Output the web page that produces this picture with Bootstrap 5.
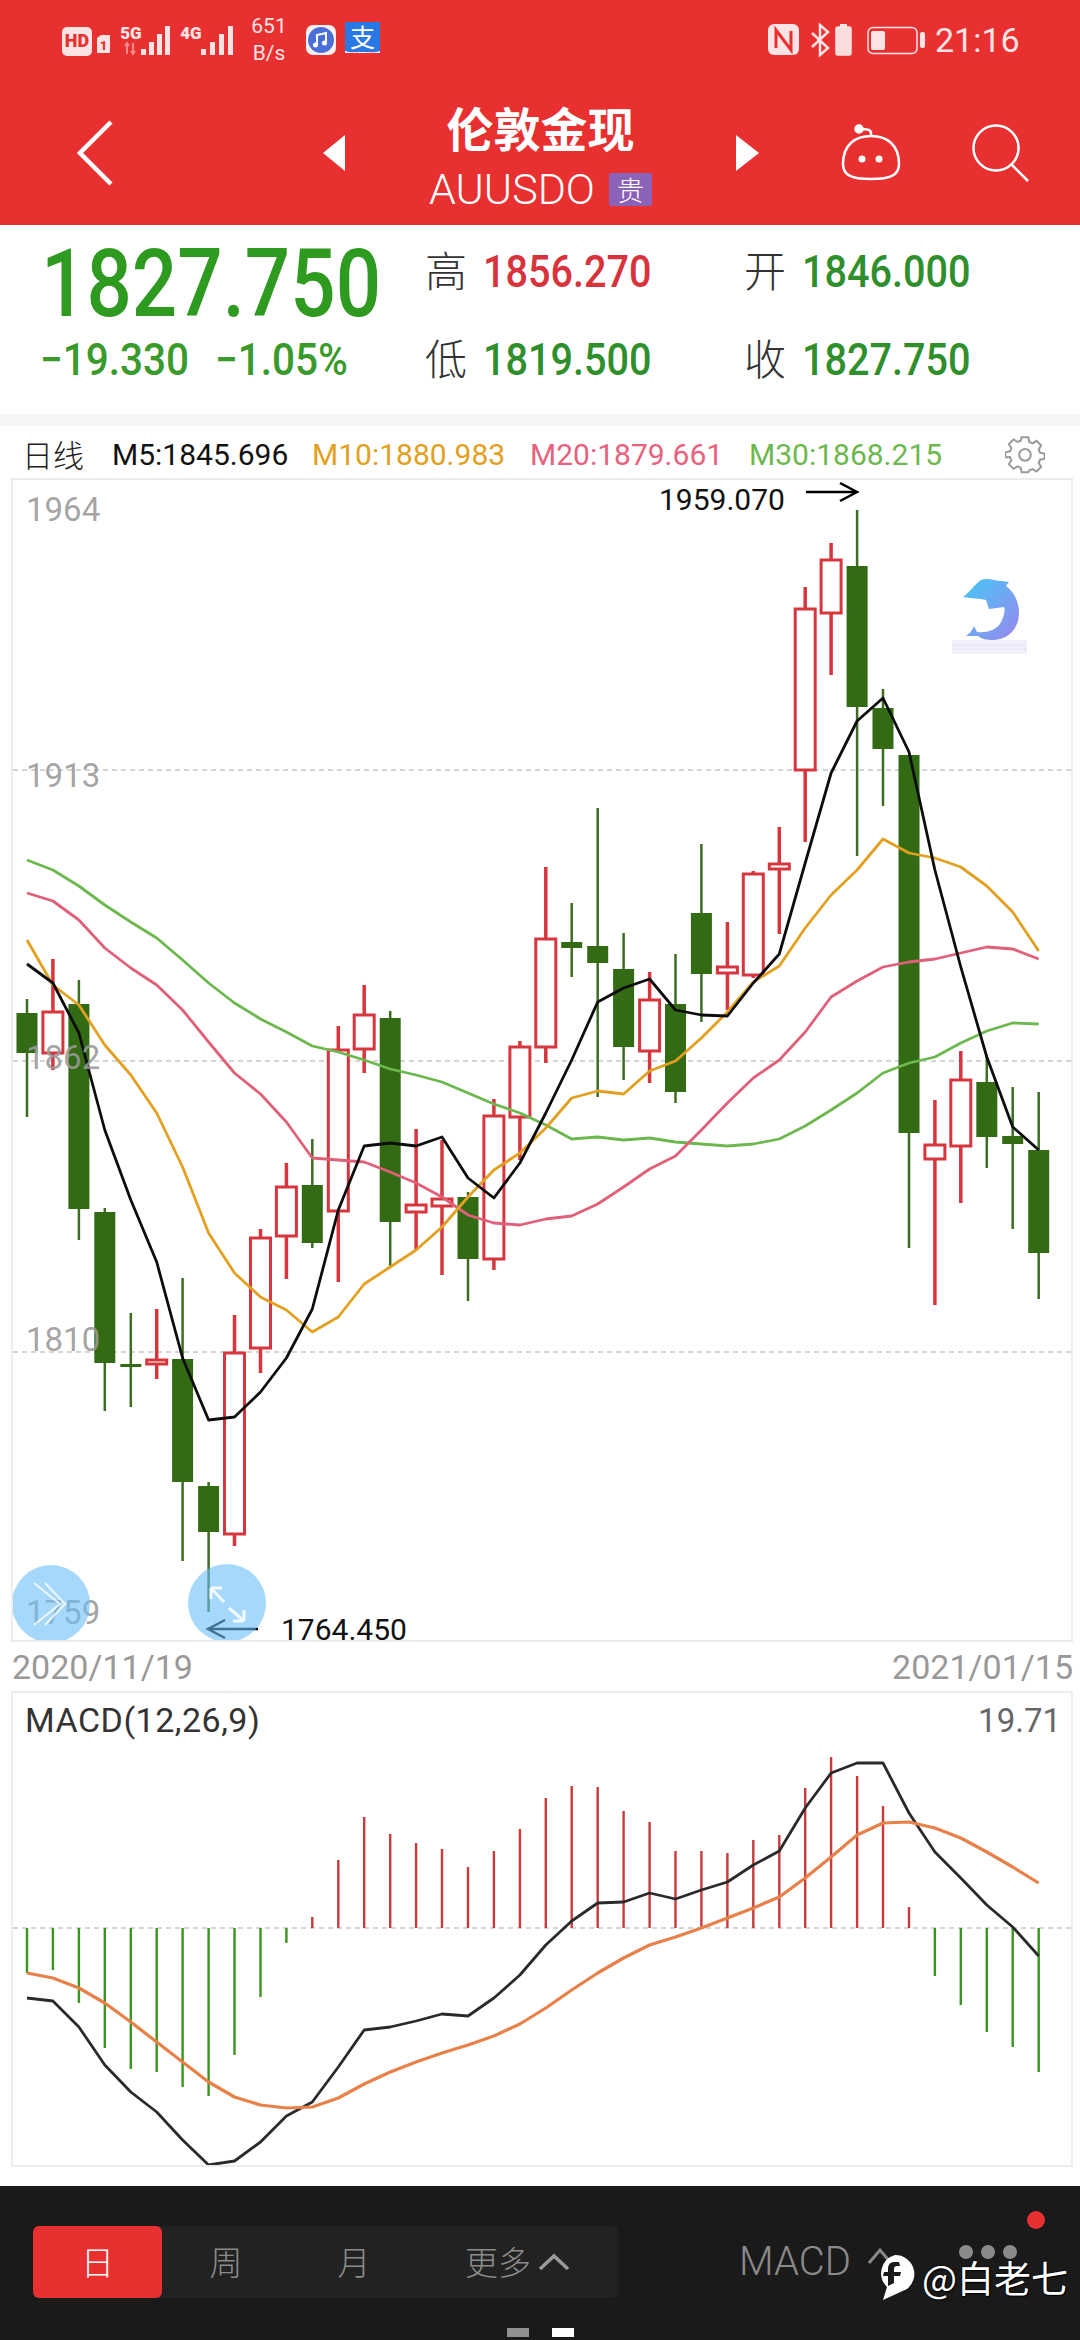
<!DOCTYPE html>
<html lang="zh">
<head>
  <meta charset="UTF-8" />
  <title>伦敦金现 AUUSDO</title>
  <meta name="viewport" content="width=device-width, initial-scale=1" />
  <link href="https://cdn.jsdelivr.net/npm/bootstrap@5.3.2/dist/css/bootstrap.min.css" rel="stylesheet" />
  <style>
    body {
      width: 1080px;
      height: 2340px;
      overflow: hidden;
      background: #fff;
      font-family: Roboto, "Noto Sans CJK SC", sans-serif;
    }
    svg { display: block; flex: none; }
    .top-head { height: 225px; background: #e83031; color: #fff; }
    .status-row { height: 80px; padding-left: 62px; padding-right: 63px; color: #fde3e3; }
    .net-speed { margin-left: 17px; width: 36px; font-size: 21px; line-height: 27px; text-align: center; }
    .sb-music { margin-left: 19px; }
    .sb-pay { margin-left: 9px; }
    .sb-time { margin-left: 10px; font-size: 34px; line-height: 1; width: 82px; }
    .nav-row { height: 145px; padding-left: 77px; }
    .tri-left { margin-left: 210px; }
    .title-block { width: 391px; text-align: center; }
    .title-main { font-family: "Noto Sans CJK SC", sans-serif; font-size: 47px; font-weight: 700; line-height: 58px; margin: 4px 0 11px; }
    .title-sub { height: 44px; font-size: 43px; font-weight: 300; line-height: 44px; }
    .grade-tag { width: 43px; height: 33px; background: #8a62b8; border-radius: 2px; margin-left: 14px; font-family: "Noto Sans CJK SC", sans-serif; font-size: 27px; line-height: 33px; }
    .nav-robot { margin-left: 82px; }
    .nav-search { margin-left: 71px; }

    .quote-grid {
      height: 189px;
      padding: 3px 0 0 40px;
      display: grid;
      grid-template-columns: 387px 319px 1fr;
      grid-auto-rows: 88px;
      align-items: center;
    }
    .squeeze { display: inline-block; transform: scaleX(.9); transform-origin: left center; white-space: nowrap; }
    .last-price { font-size: 94px; font-weight: 500; color: #2f9a20; line-height: 1; margin: 24px 0 0 1px; }
    .last-price .squeeze { transform: scaleX(.85); }
    .chg-val { font-size: 45px; font-weight: 500; color: #3a9a2c; }
    .chg-first { width: 175px; }
    .stat-name { display: inline-block; width: 58px; margin-left: -2px; margin-bottom: 6px; font-size: 42px; color: #333; font-family: "Noto Sans CJK SC", sans-serif; font-weight: 300; line-height: 1; vertical-align: middle; }
    .stat-val { font-size: 44px; font-weight: 500; vertical-align: middle; }
    .tone-up { color: #d8333c; }
    .tone-down { color: #2f8f2c; }

    .grey-strip { height: 12px; background: #f5f5f5; }
    .ma-row { height: 52px; padding: 4px 0 0 22px; font-size: 30px; }
    .ma-name { font-family: "Noto Sans CJK SC", sans-serif; font-weight: 300; color: #222; width: 90px; font-size: 31px; }
    .ma5 { color: #111; width: 200px; }
    .ma10 { color: #e3a020; width: 218px; }
    .ma20 { color: #e6627e; width: 219px; }
    .ma30 { color: #6db84e; width: 256px; }

    .chart-box { margin: 0 7px 0 11px; border: 2px solid #ececec; }
    .kline-box { height: 1164px; }
    .macd-box { height: 476px; }
    .date-row { height: 49px; margin: 0 7px 0 12px; font-size: 34px; line-height: 50px; color: #999; }
    .white-gap { height: 19px; }

    .tab-bar { height: 154px; padding-top: 40px; background: #1a1a1a; position: relative; }
    .tab-top { height: 72px; padding-left: 33px; }
    .seg-tabs { width: 585px; height: 72px; background: #222; border-radius: 6px; color: #8c8c8c; font-family: "Noto Sans CJK SC", sans-serif; font-weight: 300; font-size: 33px; }
    .seg-tab { width: 128px; }
    .seg-on { width: 129px; background: #e83031; color: #fff; border-radius: 6px; }
    .seg-more { width: 200px; }
    .more-arrow { margin-left: 6px; }
    .macd-pick { margin-left: 121px; font-size: 40px; color: #8a8a8a; font-weight: 300; line-height: 1; }
    .pick-arrow { margin-left: 16px; margin-top: -12px; }
    .pick-dots { margin-left: 66px; margin-top: -18px; }
    .red-dot { position: absolute; left: 1027px; top: 25px; width: 18px; height: 18px; border-radius: 50%; background: #e83031; }
    .pager { gap: 23px; margin-top: 30px; }
    .pager i { display: block; width: 22px; height: 9px; background: #8f8f8f; }
    .pager i.on { background: #fff; }
    .wm { position: absolute; left: 875px; top: 68px; color: #fff; font-size: 37px; line-height: 44px; font-family: "Noto Sans CJK SC", sans-serif; text-shadow: 0 0 2px #000, 1px 1px 1px #000; }
    .wm svg { margin-right: 6px; }
  </style>
</head>
<body>

  <div class="top-head">
    <div class="status-row d-flex align-items-center">
      <svg width="172" height="34" viewBox="62 23 172 34">
        <rect x="62" y="27" width="30" height="29" rx="5" fill="#fde3e3"/>
        <text x="77" y="47" text-anchor="middle" font-size="18" font-weight="900" fill="#e83031">HD</text>
        <path d="M97 38l4-3h9v18H97z" fill="#fde3e3"/>
        <text x="103.500" y="50" text-anchor="middle" font-size="13" font-weight="900" fill="#e83031">1</text>
        <text x="131" y="39" text-anchor="middle" font-size="17" font-weight="900" fill="#fde3e3">5G</text>
        <path d="M127 43v11M125 46l2-3 2 3M133 54V43M131 51l2 3 2-3" stroke="#f58a8a" stroke-width="2" fill="none"/>
        <rect x="141" y="49" width="5" height="6" fill="#fde3e3"/><rect x="149" y="42" width="5" height="13" fill="#fde3e3"/><rect x="157" y="34" width="5" height="21" fill="#fde3e3"/><rect x="165" y="26" width="5" height="29" fill="#fde3e3"/>
        <text x="191" y="39" text-anchor="middle" font-size="17" font-weight="900" fill="#fde3e3">4G</text>
        <rect x="201" y="49" width="5" height="6" fill="#fde3e3"/><rect x="210" y="42" width="5" height="13" fill="#fde3e3"/><rect x="219" y="34" width="5" height="21" fill="#fde3e3"/><rect x="228" y="26" width="5" height="29" fill="#fde3e3"/>
      </svg>
      <div class="net-speed">651<br>B/s</div>
      <svg class="sb-music" width="30" height="30" viewBox="0 0 30 30">
        <rect width="30" height="30" rx="7" fill="#fdf0f0"/>
        <circle cx="15" cy="15" r="13" fill="#4a70d8"/>
        <path d="M11 20V10l9-2v10" stroke="#fff" stroke-width="2" fill="none"/>
        <circle cx="9.500" cy="20" r="2.500" fill="#fff"/><circle cx="18.500" cy="18" r="2.500" fill="#fff"/>
      </svg>
      <svg class="sb-pay" width="35" height="36" viewBox="0 0 35 36">
        <rect width="35" height="30" fill="#2a78e4"/>
        <path d="M17 30c8 0 14 1 18-1v2H0v-2c5 2 10 1 17 1z" fill="#fff"/>
        <text x="17.500" y="25" text-anchor="middle" font-size="25" fill="#fff" font-family="Noto Sans CJK SC">支</text>
      </svg>
      <svg class="ms-auto" width="157" height="34" viewBox="768 23 157 34">
        <rect x="768" y="24" width="31" height="31" rx="6" fill="#fde3e3"/>
        <path d="M776 48V30l15 20V31" stroke="#e83031" stroke-width="3" fill="none"/>
        <path d="M812 33l16 15-8 7V25l8 7-16 15" stroke="#fde3e3" stroke-width="2.500" fill="none"/>
        <rect x="836" y="27" width="15" height="28" rx="2" fill="#fbdcdc" stroke="#fde3e3" stroke-width="1.500"/>
        <rect x="840" y="24" width="7" height="3" fill="#fde3e3"/>
        <rect x="868" y="27.500" width="49" height="26" rx="5" fill="none" stroke="#fde3e3" stroke-width="1.500"/>
        <rect x="871" y="31" width="14" height="19" rx="2" fill="#fde3e3"/>
        <rect x="920" y="32" width="5" height="16" rx="2" fill="#fde3e3"/>
      </svg>
      <div class="sb-time">21:16</div>
    </div>
    <div class="nav-row d-flex align-items-center">
      <svg width="36" height="66" viewBox="76 117 36 66"><path d="M110 119L79 150l31 31" fill="none" stroke="#fff" stroke-width="4.500"/></svg>
      <svg class="tri-left" width="22" height="36" viewBox="0 0 22 36"><path d="M22 0v36L0 18z" fill="#fff"/></svg>
      <div class="title-block">
        <div class="title-main">伦敦金现</div>
        <div class="title-sub d-flex justify-content-center align-items-center">AUUSDO<span class="grade-tag">贵</span></div>
      </div>
      <svg width="23" height="36" viewBox="0 0 23 36"><path d="M0 0v36l23-18z" fill="#fff"/></svg>
      <svg class="nav-robot" width="60" height="58" viewBox="840 125 60 58" fill="none" stroke="#fff" stroke-width="2.500">
        <path d="M842 165c0-20 13-28 28-28s28 8 28 28c0 11-8 15-28 15s-28-4-28-15z"/>
        <path d="M870 137c1-8-4-6-10-7"/>
        <circle cx="858" cy="130" r="3.500" fill="#fff"/><circle cx="861" cy="160" r="3.500" fill="#fff" stroke="none"/><circle cx="878" cy="160" r="3.500" fill="#fff" stroke="none"/>
      </svg>
      <svg class="nav-search" width="58" height="58" viewBox="970 124 58 58" fill="none" stroke="#fff" stroke-width="2.500">
        <circle cx="994" cy="148" r="22.500"/><path d="M1010 165l16 16"/>
      </svg>
    </div>
  </div>

  <div class="quote-grid">
    <div class="last-price"><span class="squeeze">1827.750</span></div>
    <div><span class="stat-name">高</span><span class="stat-val squeeze tone-up">1856.270</span></div>
    <div><span class="stat-name">开</span><span class="stat-val squeeze tone-down">1846.000</span></div>
    <div class="d-flex"><span class="chg-val chg-first"><span class="squeeze">−19.330</span></span><span class="chg-val"><span class="squeeze">−1.05%</span></span></div>
    <div><span class="stat-name">低</span><span class="stat-val squeeze tone-down">1819.500</span></div>
    <div><span class="stat-name">收</span><span class="stat-val squeeze tone-down">1827.750</span></div>
  </div>
  <div class="grey-strip"></div>
  <div class="ma-row d-flex align-items-center">
    <span class="ma-name">日线</span>
    <span class="ma5">M5:1845.696</span>
    <span class="ma10">M10:1880.983</span>
    <span class="ma20">M20:1879.661</span>
    <span class="ma30">M30:1868.215</span>
    <svg width="40" height="40" viewBox="0 0 24 24" fill="none" stroke="#999" stroke-width="1.200">
      <path d="M10 2h4l.6 2.800 1.900.8 2.400-1.500 2.800 2.800-1.500 2.400.8 1.900 2.800.6v3l-2.800.6-.8 1.900 1.500 2.400-2.800 2.800-2.400-1.500-1.900.8L14 23h-4l-.6-2.800-1.900-.8-2.400 1.500-2.800-2.800 1.500-2.400-.8-1.900L.2 14v-3l2.800-.6.8-1.900-1.500-2.400 2.800-2.800 2.400 1.500 1.900-.8z"/>
      <circle cx="12" cy="12.500" r="3.500"/>
    </svg>
  </div>

  <div class="chart-box kline-box">
    <svg width="1058" height="1160" viewBox="13 480 1058 1160">
      <defs>
        <linearGradient id="finGrad" x1="0" y1="0" x2="1" y2="1">
          <stop offset="0" stop-color="#45c8f5"/><stop offset="1" stop-color="#9a86ee"/>
        </linearGradient>
      </defs>
      <path d="M13 770H1071M13 1061H1071M13 1352H1071" stroke="#d4d4d4" stroke-width="2" stroke-dasharray="5 4"/>
      <g id="candles"></g>
      <g id="maLines" fill="none" stroke-width="2.800" stroke-linejoin="round"></g>
      <g font-size="33" fill="#999" fill-opacity=".9">
        <text x="26" y="521">1964</text>
        <text x="26" y="787">1913</text>
        <text x="26" y="1069">1862</text>
        <text x="26" y="1351">1810</text>
        <text x="26" y="1624">1759</text>
      </g>
      <g font-size="30" fill="#111">
        <text x="659" y="510">1959.070</text>
        <text x="281" y="1640">1764.450</text>
      </g>
      <path d="M806 492H856M840 483l17 9-17 9" fill="none" stroke="#000" stroke-width="2.500"/>
      <path d="M258 1629H208M225 1620l-17 9 17 9" fill="none" stroke="#000" stroke-width="2.500"/>
      <circle cx="51" cy="1604" r="39" fill="#69bef8" fill-opacity=".6"/>
      <circle cx="227" cy="1603" r="39" fill="#69bef8" fill-opacity=".6"/>
      <path d="M34 1583l26 21-26 21M45 1583l20 21-20 21" fill="none" stroke="#fff" stroke-opacity=".8" stroke-width="2"/>
      <path d="M211 1588l13 14M211 1588h11M211 1588v11M229 1608l15 13M244 1621h-11M244 1621v-11" fill="none" stroke="#fff" stroke-opacity=".85" stroke-width="3"/>
      <rect x="952" y="640" width="75" height="14" fill="#f0f0fb"/>
      <path d="M952 645H1027M952 649H1027" stroke="#e2e2f5"/>
      <path d="M963 597C970 592 975 584 981 580C988 577 994 581 1002 581L1009 582L1006 586C1014 592 1019 602 1019 613C1019 630 1006 641 992 640C986 640 982 639 978 636L966 636C969 634 972 631 974 626L977 632C985 633 998 631 1002 620C1005 613 1005 609 1004 607L989 609L986 600C980 598 973 599 963 597Z" fill="url(#finGrad)"/>
    </svg>
  </div>

  <div class="date-row d-flex justify-content-between">
    <span>2020/11/19</span><span>2021/01/15</span>
  </div>

  <div class="chart-box macd-box">
    <svg width="1058" height="472" viewBox="13 1693 1058 472">
      <path d="M13 1928H1071" stroke="#d4d4d4" stroke-width="2" stroke-dasharray="5 4"/>
      <g id="macdBars" stroke-width="2.400"></g>
      <g id="macdLines" fill="none" stroke-linejoin="round"></g>
      <text x="25" y="1732" font-size="34" letter-spacing=".5" fill="#333">MACD(12,26,9)</text>
      <text x="1061" y="1732" font-size="33" fill="#666" text-anchor="end">19.71</text>
    </svg>
  </div>
  <div class="white-gap"></div>

  <div class="tab-bar">
    <div class="tab-top d-flex align-items-center">
      <div class="seg-tabs d-flex">
        <div class="seg-tab seg-on d-flex align-items-center justify-content-center">日</div>
        <div class="seg-tab d-flex align-items-center justify-content-center">周</div>
        <div class="seg-tab d-flex align-items-center justify-content-center">月</div>
        <div class="seg-more d-flex align-items-center justify-content-center">更多
          <svg class="more-arrow" width="34" height="20" viewBox="0 0 34 20"><path d="M3 17L17 4l14 13" fill="none" stroke="#999" stroke-width="3.500"/></svg>
        </div>
      </div>
      <span class="macd-pick">MACD</span>
      <svg class="pick-arrow" width="26" height="18" viewBox="0 0 26 18"><path d="M2 16L13 3l11 13" fill="none" stroke="#8a8a8a" stroke-width="3"/></svg>
      <svg class="pick-dots" width="58" height="18" viewBox="0 0 58 18" fill="#8a8a8a"><circle cx="7" cy="8" r="7"/><circle cx="29" cy="8" r="7"/><circle cx="51" cy="8" r="7"/></svg>
    </div>
    <div class="pager d-flex justify-content-center"><i></i><i class="on"></i></div>
    <span class="red-dot"></span>
    <div class="wm d-flex align-items-center">
      <svg width="41" height="46" viewBox="0 0 41 46">
        <path d="M20 1a19 19 0 0 1 12 34L8 46l4-13A19 19 0 0 1 20 1z" fill="#fff"/>
        <path d="M24 8h-5c-4 0-6 3-6 7v3H9l-1 4h5v10l6-3v-7h6l1-4h-7v-3c0-2 1-3 3-3h3z" fill="#1a1a1a"/>
      </svg>@白老七
    </div>
  </div>

  <script src="https://cdn.jsdelivr.net/npm/bootstrap@5.3.2/dist/js/bootstrap.bundle.min.js"></script>
  <script>
    // [high, bodyTop, bodyBottom, low, isRed], page y coordinates
    const candles = [
      [999,1013,1053,1117,0],[959,1011,1054,1070,1],[980,1004,1209,1240,0],[1208,1212,1363,1411,0],
      [1313,1364,1367,1407,0],[1309,1359,1365,1379,1],[1278,1359,1482,1561,0],[1482,1486,1532,1612,0],
      [1315,1352,1535,1546,1],[1229,1237,1349,1373,1],[1163,1186,1237,1279,1],[1139,1185,1243,1248,0],
      [1026,1049,1212,1282,1],[985,1014,1050,1073,1],[1011,1018,1222,1267,0],[1129,1204,1213,1250,1],
      [1140,1198,1207,1275,1],[1192,1197,1259,1301,0],[1099,1115,1260,1270,1],[1041,1046,1118,1160,1],
      [867,938,1048,1063,1],[903,942,948,977,0],[808,946,963,1097,0],[933,969,1047,1080,0],
      [972,999,1052,1083,1],[954,1004,1092,1103,0],[844,913,974,1022,0],[922,966,974,1010,1],
      [871,873,976,978,1],[827,863,870,934,1],[587,608,771,842,1],[543,559,614,675,1],
      [510,566,707,856,0],[689,708,749,806,0],[755,755,1133,1248,0],[1100,1144,1160,1305,1],
      [1051,1079,1147,1203,1],[1055,1082,1137,1168,0],[1087,1136,1144,1229,0],[1092,1150,1253,1299,0]
    ];
    const ma5 = [964,983,1033,1130,1200,1262,1358,1420,1417,1392,1358,1309,1210,1146,1143,1146,1137,1178,1198,1163,1113,1060,1002,988,979,1010,1015,1016,983,954,863,773,721,698,752,870,967,1057,1127,1150];
    const ma10 = [940,985,1005,1045,1075,1113,1167,1233,1273,1297,1310,1332,1317,1284,1267,1250,1227,1197,1170,1153,1128,1098,1091,1094,1071,1061,1038,1012,982,966,928,895,870,839,853,858,867,886,912,951];
    const ma20 = [893,901,920,948,968,985,1010,1042,1073,1094,1122,1158,1160,1162,1172,1183,1197,1215,1223,1225,1219,1216,1204,1187,1169,1156,1130,1103,1078,1060,1032,997,981,967,962,959,953,947,949,959];
    const ma30 = [860,870,886,905,922,938,960,983,1003,1019,1032,1046,1052,1060,1069,1075,1082,1093,1104,1113,1125,1139,1137,1140,1138,1142,1144,1146,1144,1139,1126,1110,1093,1073,1063,1057,1043,1031,1023,1024];
    const bars = [1973,1970,2003,2048,2069,2072,2087,2096,2055,1997,1943,1917,1860,1817,1834,1843,1849,1867,1851,1829,1798,1786,1787,1811,1822,1851,1851,1853,1840,1835,1788,1757,1776,1806,1907,1976,2005,2032,2047,2072];
    const dif = [1998,2001,2027,2065,2092,2112,2140,2165,2161,2142,2116,2102,2067,2030,2027,2021,2014,2016,1998,1975,1945,1921,1903,1902,1893,1899,1890,1882,1865,1851,1808,1773,1763,1763,1813,1852,1878,1905,1927,1956];
    const dea = [1973,1978,1988,2003,2022,2042,2062,2082,2097,2105,2108,2107,2098,2084,2072,2062,2053,2045,2036,2024,2008,1990,1973,1958,1945,1937,1928,1918,1908,1897,1878,1857,1835,1823,1822,1828,1838,1852,1867,1883];

    const xAt = i => +(27 + 25.94 * i).toFixed(1);
    const RED = '#d8363f', GREEN = '#336b14';

    document.getElementById('candles').innerHTML = candles.map(([hi, top, bot, lo, red], i) => {
      const x = xAt(i);
      if (red) {
        return `<path d="M${x} ${hi}V${top}M${x} ${bot}V${lo}" stroke="${RED}" stroke-width="3.500"/>` +
          `<rect x="${x - 10}" y="${top + 1}" width="20" height="${bot - top - 2}" fill="#fff" stroke="${RED}" stroke-width="3"/>`;
      }
      return `<path d="M${x} ${hi}V${lo}" stroke="#3c6e22" stroke-width="2.500"/>` +
        `<rect x="${x - 10.500}" y="${top}" width="21" height="${bot - top}" fill="${GREEN}"/>`;
    }).join('');

    const line = (ys, color, width) =>
      `<polyline points="${ys.map((y, i) => xAt(i) + ',' + y).join(' ')}" stroke="${color}"${width ? ` stroke-width="${width}"` : ''}/>`;

    document.getElementById('maLines').innerHTML =
      line(ma30, '#6db84e') + line(ma20, '#e0607a') + line(ma10, '#e3a020') + line(ma5, '#0d0d0d');

    document.getElementById('macdBars').innerHTML = bars.map((y, i) =>
      `<path d="M${xAt(i)} 1928V${y}" stroke="${y > 1928 ? '#3a9420' : '#c93a3a'}"/>`).join('');

    document.getElementById('macdLines').innerHTML = line(dif, '#2a2a2a', 2.8) + line(dea, '#e8804a', 3.2);
  </script>
</body>
</html>
